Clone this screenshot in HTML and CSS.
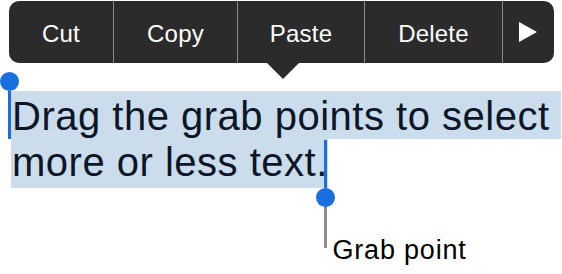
FILE: index.html
```html
<!DOCTYPE html>
<html>
<head>
<meta charset="utf-8">
<link rel="stylesheet" href="styles.css">
</head>
<body>
<div class="page">
  <div class="menu-wrap">
    <div class="menu">
      <div class="item item-cut">Cut</div>
      <div class="item item-copy">Copy</div>
      <div class="item item-paste">Paste</div>
      <div class="item item-delete">Delete</div>
      <div class="item item-more">
        <svg width="18" height="20" viewBox="0 0 18 20"><path d="M0 0 L18 10 L0 20 Z" fill="#fff"/></svg>
      </div>
    </div>
    <div class="pointer"></div>
  </div>
  <div class="selection">
    <div class="line line-1">
      <span class="hl hl-1">Drag the grab points to select&nbsp;</span>
      <span class="handle handle-start"><span class="knob"></span><span class="stem"></span></span>
    </div>
    <div class="line line-2">
      <span class="hl hl-2">more or less text.</span>
      <span class="handle handle-end"><span class="stem"></span><span class="knob"></span></span>
    </div>
  </div>
  <div class="callout">
    <div class="leader"></div>
    <div class="label">Grab point</div>
  </div>
</div>
</body>
</html>
```

FILE: styles.css
```css
html, body {
  margin: 0;
  padding: 0;
  background: #ffffff;
}

.page {
  width: 562px;
  height: 274px;
  position: relative;
  font-family: "Liberation Sans", Arial, sans-serif;
  padding-top: 1px;
  box-sizing: border-box;
}

.menu-wrap {
  position: relative;
  margin-left: 9px;
  width: 545px;
}

.menu {
  display: flex;
  height: 62px;
  background: #2b2b2b;
  border-radius: 10px;
  overflow: hidden;
}

.item {
  display: flex;
  align-items: center;
  justify-content: center;
  color: #ffffff;
  font-size: 24px;
  letter-spacing: 0.2px;
  border-left: 1px solid #8a8a8a;
  box-sizing: border-box;
  padding-top: 3px;
}

.item-cut { width: 104px; border-left: none; }
.item-copy { width: 124px; }
.item-paste { width: 127px; }
.item-delete { width: 138px; }
.item-more { width: 52px; padding-right: 2px; padding-top: 0; }

.pointer {
  position: absolute;
  left: 257px;
  top: 61px;
  width: 0;
  height: 0;
  border-left: 17px solid transparent;
  border-right: 17px solid transparent;
  border-top: 17px solid #2b2b2b;
}

.selection {
  margin-top: 28px;
  margin-left: 11px;
  color: #0b1626;
  font-size: 40px;
  letter-spacing: 0.5px;
}

.line {
  position: relative;
  display: flex;
}

.hl {
  display: block;
  background: #cbdcec;
  white-space: pre;
  padding-left: 1px;
}

.hl-1 { height: 48px; line-height: 50px; }
.hl-2 { height: 49px; line-height: 47px; }

.handle {
  position: absolute;
  display: flex;
  flex-direction: column;
  align-items: center;
  width: 19px;
}

.knob {
  width: 19px;
  height: 19px;
  border-radius: 50%;
  background: #1a6fe0;
}

.stem {
  width: 3px;
  background: #1a6fe0;
}

.handle-start {
  left: -11px;
  top: -19px;
}
.handle-start .stem { height: 48px; }

.handle-end {
  left: 305px;
  top: 1px;
}
.handle-end .stem { height: 48px; }

.callout {
  display: flex;
  align-items: flex-start;
  margin-left: 324px;
  margin-top: 18px;
}

.leader {
  width: 2.5px;
  height: 42px;
  background: #8c8c8c;
}

.label {
  font-size: 27px;
  letter-spacing: 0.8px;
  color: #000000;
  margin-left: 6px;
  margin-top: 31px;
  line-height: 27px;
}
```
